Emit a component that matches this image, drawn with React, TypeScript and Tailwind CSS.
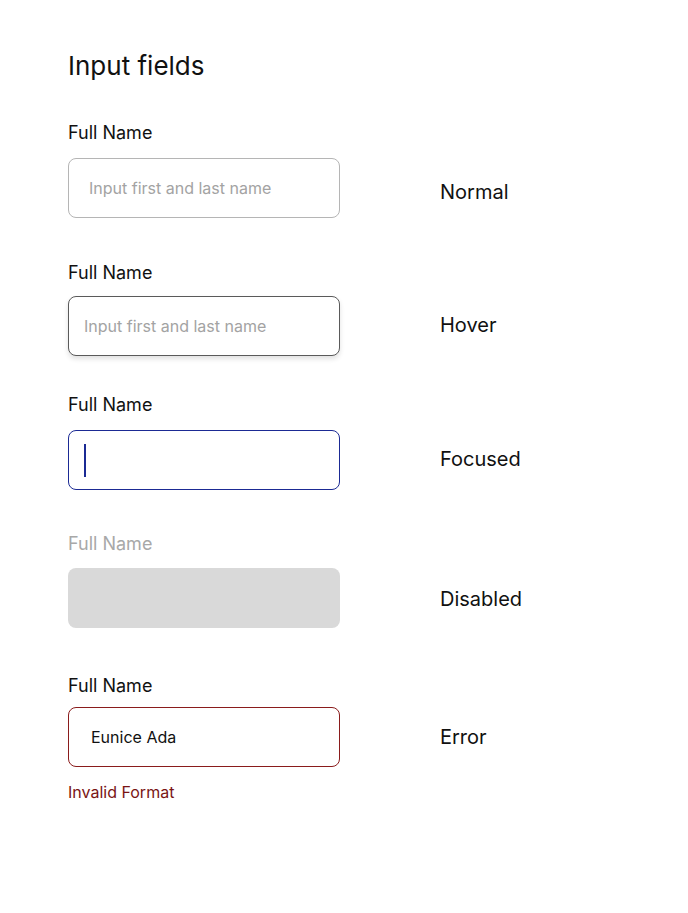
const font = "font-['Inter','Noto_Sans',sans-serif]";

type Field = {
  state: string;
  stateShift: string;
  wrap: string;
  labelTone: string;
  labelGap: string;
  box: string;
  content: React.ReactNode;
  note?: string;
};

const placeholder = (pad: string) => (
  <span className={`${pad} text-[16px] text-[#a3a3a3]`}>Input first and last name</span>
);

const fields: Field[] = [
  {
    state: "Normal",
    stateShift: "pt-[8px]",
    wrap: "mt-[38px]",
    labelTone: "text-[#111]",
    labelGap: "mb-[12px]",
    box: "border border-[#b5b5b5] bg-white",
    content: placeholder("pl-[20px]"),
  },
  {
    state: "Hover",
    stateShift: "pb-[2px]",
    wrap: "mt-[42px]",
    labelTone: "text-[#111]",
    labelGap: "mb-[10px]",
    box: "border border-[#5a5a5a] bg-white shadow-[0_3px_5px_rgba(0,0,0,0.12)]",
    content: placeholder("pl-[15px]"),
  },
  {
    state: "Focused",
    stateShift: "pb-[2px]",
    wrap: "mt-[36px]",
    labelTone: "text-[#111]",
    labelGap: "mb-[12px]",
    box: "border border-[#1b2a94] bg-white",
    content: <span className="ml-[15px] block h-[33px] w-[2px] bg-[#1b2a94]" />,
  },
  {
    state: "Disabled",
    stateShift: "pt-[2px]",
    wrap: "mt-[41px]",
    labelTone: "text-[#a8a8a8]",
    labelGap: "mb-[11px]",
    box: "bg-[#d9d9d9]",
    content: null,
  },
  {
    state: "Error",
    stateShift: "",
    wrap: "mt-[45px]",
    labelTone: "text-[#111]",
    labelGap: "mb-[8px]",
    box: "border border-[#8a1c1c] bg-white",
    content: <span className="pl-[22px] text-[16px] text-[#111]">Eunice Ada</span>,
    note: "Invalid Format",
  },
];

export default function App() {
  return (
    <div className={`min-h-[913px] w-[688px] bg-white pl-[68px] pt-[50px] ${font}`}>
      <h1 className="text-[26px] leading-[32px] font-normal text-[#111]">Input fields</h1>

      {fields.map((f) => (
        <section key={f.state} className={f.wrap}>
          <div className="flex items-end">
            <div className="w-[272px]">
              <label className={`block text-[18px] leading-[26px] ${f.labelTone} ${f.labelGap}`}>Full Name</label>
              <div className={`flex h-[60px] items-center rounded-[8px] ${f.box}`}>{f.content}</div>
            </div>
            <span className={`ml-[100px] flex h-[60px] items-center text-[20px] text-[#111] ${f.stateShift}`}>
              {f.state}
            </span>
          </div>
          {f.note && <p className="mt-[15px] text-[16px] leading-[20px] text-[#7a1414]">{f.note}</p>}
        </section>
      ))}
    </div>
  );
}
